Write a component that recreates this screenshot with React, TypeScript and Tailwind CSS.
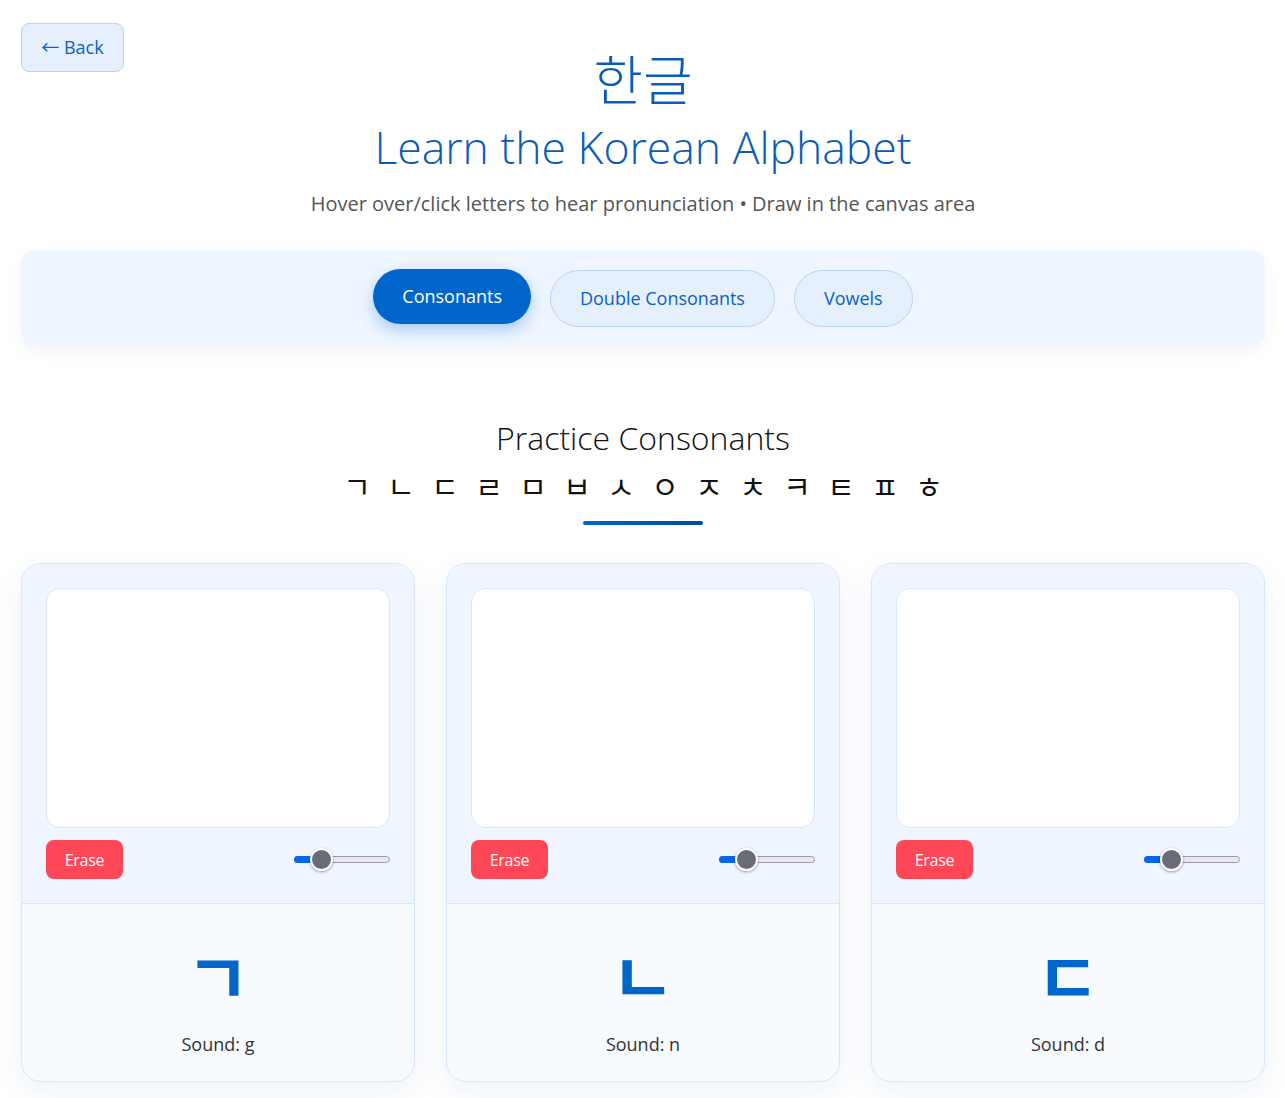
import React from 'react'

const FONT = { fontFamily: "'Open Sans', 'Noto Sans CJK KR', sans-serif" }

const consonants = ['ㄱ', 'ㄴ', 'ㄷ', 'ㄹ', 'ㅁ', 'ㅂ', 'ㅅ', 'ㅇ', 'ㅈ', 'ㅊ', 'ㅋ', 'ㅌ', 'ㅍ', 'ㅎ']

const cards = [
  { letter: 'ㄱ', sound: 'g' },
  { letter: 'ㄴ', sound: 'n' },
  { letter: 'ㄷ', sound: 'd' },
]

const Slider = () => (
  <div className="relative w-[96px] h-[22px] flex items-center">
    <div className="w-full h-[7px] rounded-full bg-[#e9e8ec] border border-[#9a99a6]" />
    <div className="absolute left-0 w-[26px] h-[7px] rounded-full bg-[#0a66e8]" />
    <div className="absolute left-[16px] w-[23px] h-[23px] rounded-full bg-[#6b6a78] border-2 border-white shadow-[0_1px_3px_rgba(0,0,0,0.35)]" />
  </div>
)

const PracticeCard = ({ letter, sound }: { letter: string; sound: string }) => (
  <div className="rounded-[20px] border border-[#d6e6fb] overflow-hidden shadow-[0_10px_30px_rgba(30,90,180,0.08)] bg-[#f7fbff]">
    <div className="bg-[#eff6ff] px-[24px] pt-[24px] pb-[24px] border-b border-[#d6e6fb]">
      <div className="h-[240px] bg-white rounded-[14px] border border-[#d6e6fb]" />
      <div className="flex items-center justify-between mt-[12px]">
        <button className="bg-[#ff4757] text-white text-[16px] rounded-[8px] w-[77px] h-[39px] flex items-center justify-center tracking-[-0.3px]">
          Erase
        </button>
        <Slider />
      </div>
    </div>
    <div className="flex flex-col items-center pt-[32px] pb-[23px]">
      <div className="text-[#0066cc] text-[70px] font-bold leading-[84px]">{letter}</div>
      <div className="text-[#333] text-[18px] leading-[27px] mt-[11px]">Sound: {sound}</div>
    </div>
  </div>
)

export default function App() {
  return (
    <div className="relative min-h-screen bg-white pl-[21px] pr-[20px] pb-[18px]" style={FONT}>
      <button className="absolute top-[23px] left-[21px] w-[103px] h-[49px] rounded-[8px] bg-[#e6f0fd] border border-[#b9d4f7] text-[#0a62c4] text-[18px] flex items-center justify-center">
        ← Back
      </button>

      <header className="text-center pt-[40px]">
        <div className="text-[#0a5cb8] text-[54px] font-light leading-[80px]">한글</div>
        <h1 className="text-[#0a5cb8] text-[44.5px] font-light leading-[58px] -mt-[2px]">
          Learn the Korean Alphabet
        </h1>
        <p className="text-[#555] text-[20px] mt-[13px]">
          Hover over/click letters to hear pronunciation • Draw in the canvas area
        </p>
      </header>

      <nav className="mt-[31px] h-[96px] rounded-[14px] bg-[#eff6ff] shadow-[0_6px_16px_rgba(30,90,180,0.06)] flex items-center justify-center gap-[19px]">
        <button className="h-[55px] px-[29px] -mt-[4px] rounded-full bg-[#0066cc] text-white text-[18px] shadow-[0_6px_16px_rgba(0,102,204,0.3)]">
          Consonants
        </button>
        <button className="h-[57px] px-[29px] rounded-full bg-[#e6f0fd] border border-[#b9d4f7] text-[#0a62c4] text-[18px]">
          Double Consonants
        </button>
        <button className="h-[57px] px-[29px] rounded-full bg-[#e6f0fd] border border-[#b9d4f7] text-[#0a62c4] text-[18px]">
          Vowels
        </button>
      </nav>

      <section className="text-center mt-[70px]">
        <h2 className="text-[#111] text-[32px] font-light leading-[44px]">Practice Consonants</h2>
        <div className="flex justify-center gap-[14px] mt-[8px] text-[#111] text-[30px] leading-[38px]">
          {consonants.map((c) => (
            <span key={c} className="w-[30px] text-center">{c}</span>
          ))}
        </div>
        <div className="mx-auto mt-[15px] w-[120px] h-[4px] rounded-full bg-gradient-to-r from-[#0066cc] to-[#004c99]" />
      </section>

      <div className="grid grid-cols-3 gap-[31px] mt-[38px]">
        {cards.map((card) => (
          <PracticeCard key={card.letter} letter={card.letter} sound={card.sound} />
        ))}
      </div>
    </div>
  )
}
